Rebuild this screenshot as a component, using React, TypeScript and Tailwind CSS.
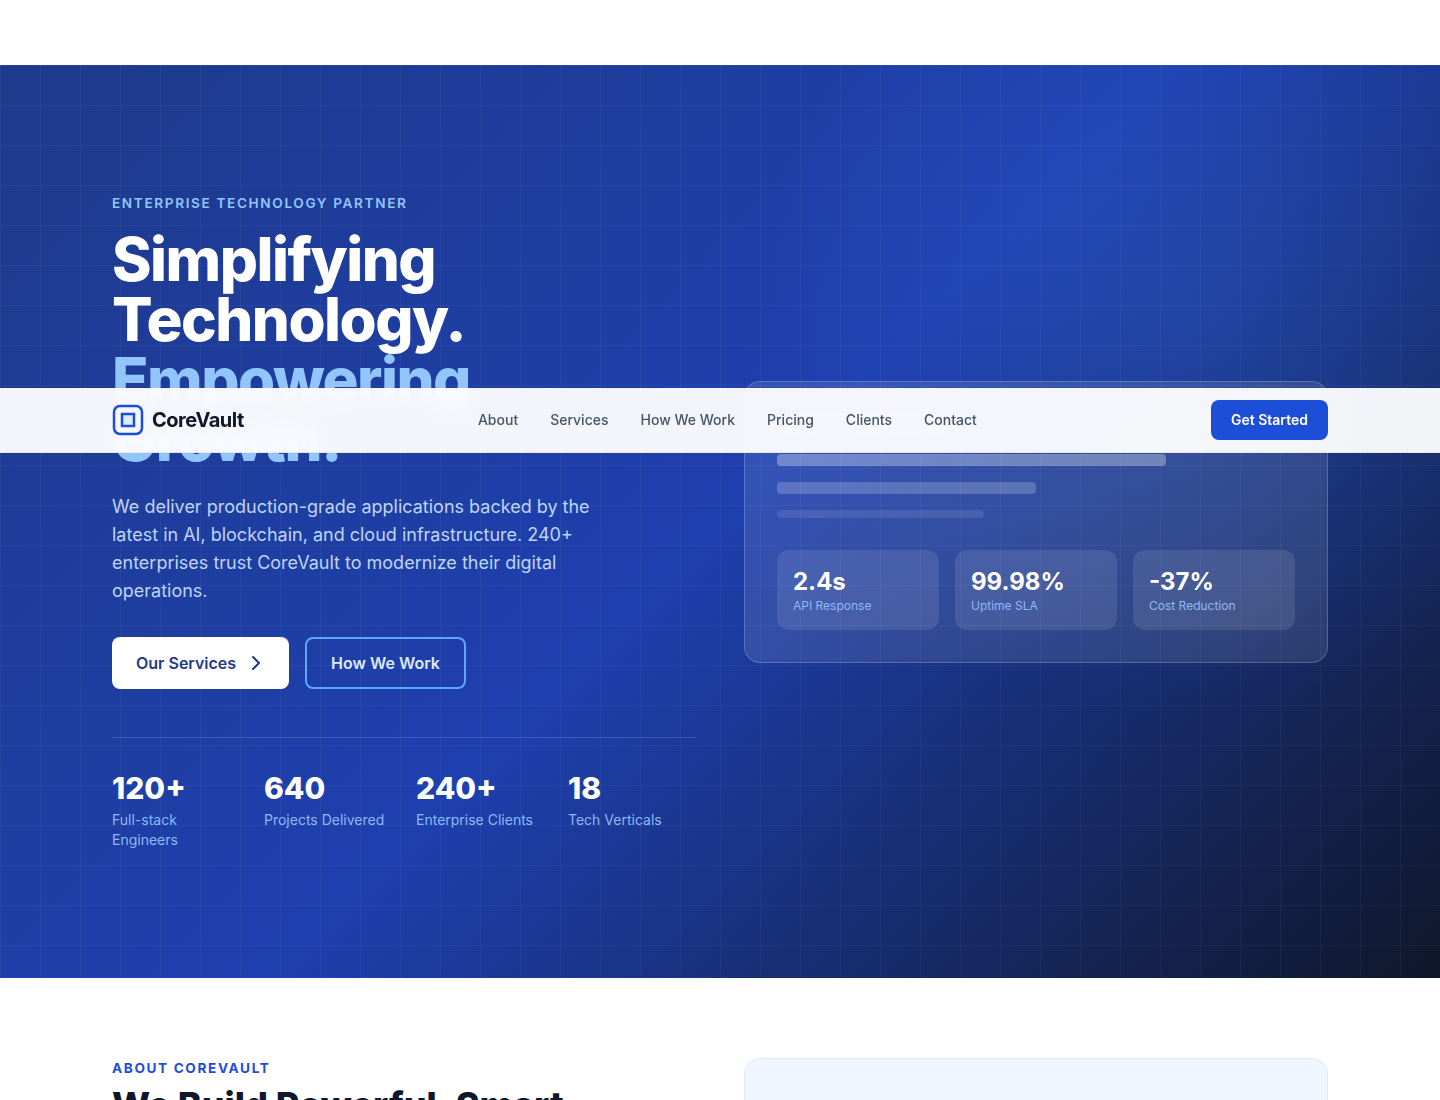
import React from 'react';

const font = { fontFamily: 'Inter, "Liberation Sans", sans-serif' };

const navLinks = ['About', 'Services', 'How We Work', 'Pricing', 'Clients', 'Contact'];

const heroStats = [
  { value: '120+', label: 'Full-stack Engineers' },
  { value: '640', label: 'Projects Delivered' },
  { value: '240+', label: 'Enterprise Clients' },
  { value: '18', label: 'Tech Verticals' },
];

const metrics = [
  { value: '2.4s', label: 'API Response' },
  { value: '99.98%', label: 'Uptime SLA' },
  { value: '-37%', label: 'Cost Reduction' },
];

function Logo() {
  return (
    <svg width="32" height="32" viewBox="0 0 32 32" fill="none" aria-hidden="true">
      <rect x="2" y="2" width="28" height="28" rx="6" stroke="#1d4ed8" strokeWidth="2.5" />
      <rect x="10" y="10" width="12" height="12" stroke="#1d4ed8" strokeWidth="2.5" fill="#93c5fd" fillOpacity="0.25" />
    </svg>
  );
}

function Nav() {
  return (
    <nav className="absolute left-0 right-0 top-[388px] z-20 h-[65px] border-b border-[#e5e7eb] bg-white/95 backdrop-blur-md">
      <div className="mx-auto flex h-full w-[1216px] items-center justify-between">
        <div className="flex items-center gap-2">
          <Logo />
          <span className="text-xl font-bold tracking-[-0.025em] text-[#0f172a]">CoreVault</span>
        </div>
        <ul className="flex items-center gap-8">
          {navLinks.map((link) => (
            <li key={link} className="text-sm font-medium text-[#475569]">{link}</li>
          ))}
        </ul>
        <button className="h-10 rounded-lg bg-[#1d4ed8] px-5 text-sm font-semibold text-white">Get Started</button>
      </div>
    </nav>
  );
}

function Hero() {
  return (
    <section className="relative h-[913px] overflow-hidden bg-[radial-gradient(circle_420px_at_82%_25%,rgba(59,130,246,0.2)_0%,rgba(59,130,246,0)_100%),linear-gradient(135deg,#1e3a8a_0%,#1e40af_50%,#0f172a_100%)]">
      <div className="absolute inset-0 bg-[linear-gradient(rgba(255,255,255,0.04)_1px,transparent_1px),linear-gradient(90deg,rgba(255,255,255,0.04)_1px,transparent_1px)] bg-[size:40px_40px]" />
      <div className="relative mx-auto grid h-full w-[1216px] grid-cols-2 items-center gap-12">
        <div>
          <p className="mb-4 text-[13.6px] font-semibold uppercase leading-5 tracking-[0.12em] text-[#93c5fd]">Enterprise Technology Partner</p>
          <h1 className="mb-6 w-[500px] text-[60px] font-extrabold leading-[60px] tracking-[-0.025em] text-white">
            Simplifying Technology. <span className="text-[#93c5fd]">Empowering Growth.</span>
          </h1>
          <p className="mb-8 w-[520px] text-lg leading-7 text-[#bfd4f6]">
            We deliver production-grade applications backed by the latest in AI, blockchain, and cloud infrastructure. 240+ enterprises trust CoreVault to modernize their digital operations.
          </p>
          <div className="flex gap-4">
            <button className="flex h-[52px] items-center gap-[10px] rounded-lg bg-white pl-6 pr-[23px] text-base font-semibold text-[#1e3a8a]">
              Our Services
              <svg width="20" height="20" viewBox="0 0 20 20" fill="none" stroke="currentColor" strokeWidth="2" strokeLinecap="round" strokeLinejoin="round" aria-hidden="true">
                <path d="M7 4l6 6-6 6" />
              </svg>
            </button>
            <button className="h-[52px] rounded-lg border-2 border-[#60a5fa] px-6 text-base font-semibold text-[#dbeafe]">How We Work</button>
          </div>
          <div className="mt-12 grid grid-cols-[repeat(4,121px)] gap-[31px] border-t border-white/15 pt-8">
            {heroStats.map((stat) => (
              <div key={stat.value}>
                <div className="text-[30px] font-extrabold leading-9 text-white">{stat.value}</div>
                <div className="mt-1 text-sm leading-5 text-[#90b8f5]">{stat.label}</div>
              </div>
            ))}
          </div>
        </div>
        <div className="rounded-2xl border border-white/20 bg-white/10 p-8">
          <div className="mb-4 h-6 w-1/3 rounded bg-white/10" />
          <div className="mb-4 h-3 w-3/4 rounded bg-white/30" />
          <div className="mb-4 h-3 w-1/2 rounded bg-white/20" />
          <div className="mb-8 h-2 w-2/5 rounded bg-white/10" />
          <div className="grid grid-cols-3 gap-4">
            {metrics.map((m) => (
              <div key={m.label} className="rounded-xl bg-white/10 p-4">
                <div className="text-2xl font-bold leading-8 text-white">{m.value}</div>
                <div className="text-xs leading-4 text-[#90b8f5]">{m.label}</div>
              </div>
            ))}
          </div>
        </div>
      </div>
    </section>
  );
}

function About() {
  return (
    <section className="mx-auto grid w-[1216px] grid-cols-2 gap-12 pt-20">
      <div>
        <p className="mb-1.5 text-[13.6px] font-bold uppercase leading-5 tracking-[0.12em] text-[#1d4ed8]">About CoreVault</p>
        <h2 className="text-4xl font-extrabold leading-[1.2] text-[#0f172a]">We Build Powerful, Smart</h2>
      </div>
      <div className="h-[400px] rounded-2xl border border-[#dbeafe] bg-[#eff6ff]" />
    </section>
  );
}

export default function App() {
  return (
    <div className="relative h-[1100px] overflow-hidden bg-white" style={font}>
      <div className="h-[65px]" />
      <Nav />
      <Hero />
      <About />
    </div>
  );
}
